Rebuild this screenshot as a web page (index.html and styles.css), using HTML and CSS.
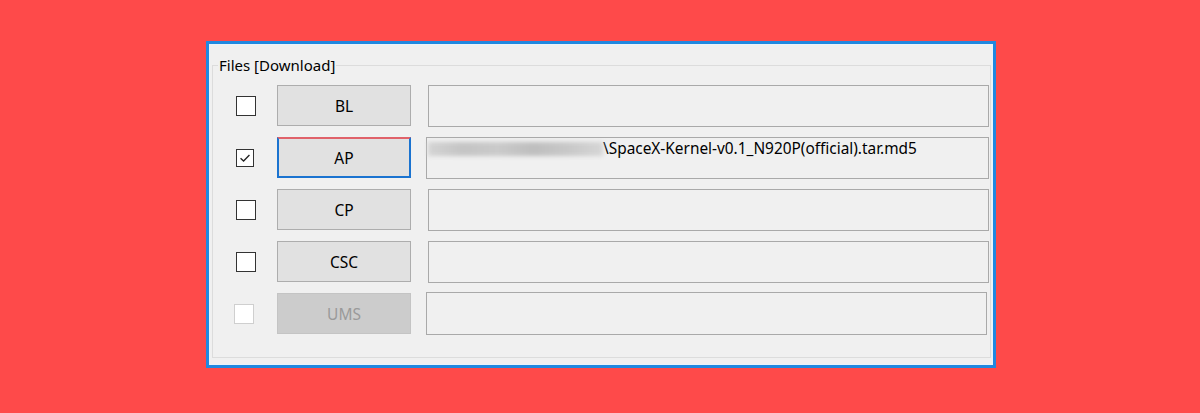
FILE: index.html
```html
<!DOCTYPE html>
<html>
<head>
<meta charset="utf-8">
<link rel="stylesheet" href="styles.css">
</head>
<body>
<div class="window">
  <fieldset class="group">
    <legend class="group-title">Files [Download]</legend>
    <div class="rows">
      <div class="row">
        <span class="check"></span>
        <button class="btn">BL</button>
        <div class="field"></div>
      </div>
      <div class="row row-ap">
        <span class="check checked">
          <svg viewBox="0 0 18 18" width="18" height="18"><path d="M4 9.2 L7.4 12.4 L14 5.6" fill="none" stroke="#222" stroke-width="1.5"/></svg>
        </span>
        <button class="btn btn-focus">AP</button>
        <div class="field field-wide"><span class="blurred"></span><span class="path">\SpaceX-Kernel-v0.1_N920P(official).tar.md5</span></div>
      </div>
      <div class="row">
        <span class="check"></span>
        <button class="btn">CP</button>
        <div class="field"></div>
      </div>
      <div class="row">
        <span class="check"></span>
        <button class="btn">CSC</button>
        <div class="field"></div>
      </div>
      <div class="row row-ums">
        <span class="check disabled"></span>
        <button class="btn btn-disabled">UMS</button>
        <div class="field field-ums"></div>
      </div>
    </div>
  </fieldset>
</div>
</body>
</html>
```

FILE: styles.css
```css
html, body {
  margin: 0;
  padding: 0;
}
body {
  background: #fe4a4a;
  width: 1200px;
  height: 413px;
  overflow: hidden;
  font-family: "Noto Sans", "Open Sans", sans-serif;
  padding-top: 41px;
  box-sizing: border-box;
}
.window {
  margin-left: 206px;
  width: 790px;
  height: 327px;
  box-sizing: border-box;
  border: 3px solid #2088e0;
  box-shadow: inset 0 0 0 1px #e8f4fb;
  background: #f0f0f0;
  padding: 13px 2px 0 3px;
}
.group {
  margin: 0;
  padding: 0;
  border: 1px solid #dcdcdc;
  height: 301px;
  box-sizing: border-box;
}
.group-title {
  margin-left: 5px;
  padding: 0 1px;
  font-size: 15px;
  line-height: 16px;
  color: #000;
}
.rows {
  display: flex;
  flex-direction: column;
  gap: 11px;
  padding: 12px 0 0 23px;
}
.row {
  display: flex;
  align-items: center;
  height: 41px;
}
.check {
  width: 20px;
  height: 20px;
  box-sizing: border-box;
  border: 1px solid #333;
  background: #fff;
  flex: none;
  display: flex;
  align-items: center;
  justify-content: center;
}
.check.checked {
  width: 18px;
  height: 18px;
  margin-right: 2px;
}
.check.disabled {
  border-color: #cfcfcf;
  margin-left: -2px;
  margin-right: 2px;
}
.btn {
  margin-left: 21px;
  width: 134px;
  height: 41px;
  flex: none;
  box-sizing: border-box;
  border: 1px solid #adadad;
  background: #e1e1e1;
  font-family: inherit;
  font-size: 15.5px;
  color: #000;
  padding: 0;
}
.btn-focus {
  border: 2px solid #1a73d0;
  border-top-color: #e0626a;
}
.btn-disabled {
  background: #cccccc;
  border-color: #c4c4c4;
  color: #9a9a9a;
}
.field {
  margin-left: 17px;
  width: 561px;
  height: 42px;
  flex: none;
  box-sizing: border-box;
  border: 1px solid #a9a9a9;
  background: #f0f0f0;
  display: flex;
  align-items: flex-start;
  padding: 2px 0 0 1px;
}
.field-wide {
  margin-left: 15px;
  width: 563px;
}
.field-ums {
  margin-left: 15px;
  height: 43px;
}
.blurred {
  width: 175px;
  height: 14px;
  margin-top: 2px;
  background: linear-gradient(90deg, #d4d4d4, #c4c4c4 20%, #cacaca 40%, #bebebe 60%, #c8c8c8 80%, #d6d6d6);
  filter: blur(2px);
  flex: none;
}
.path {
  font-size: 15.4px;
  line-height: 18px;
  color: #000;
  white-space: nowrap;
  margin-left: 0;
}
```
